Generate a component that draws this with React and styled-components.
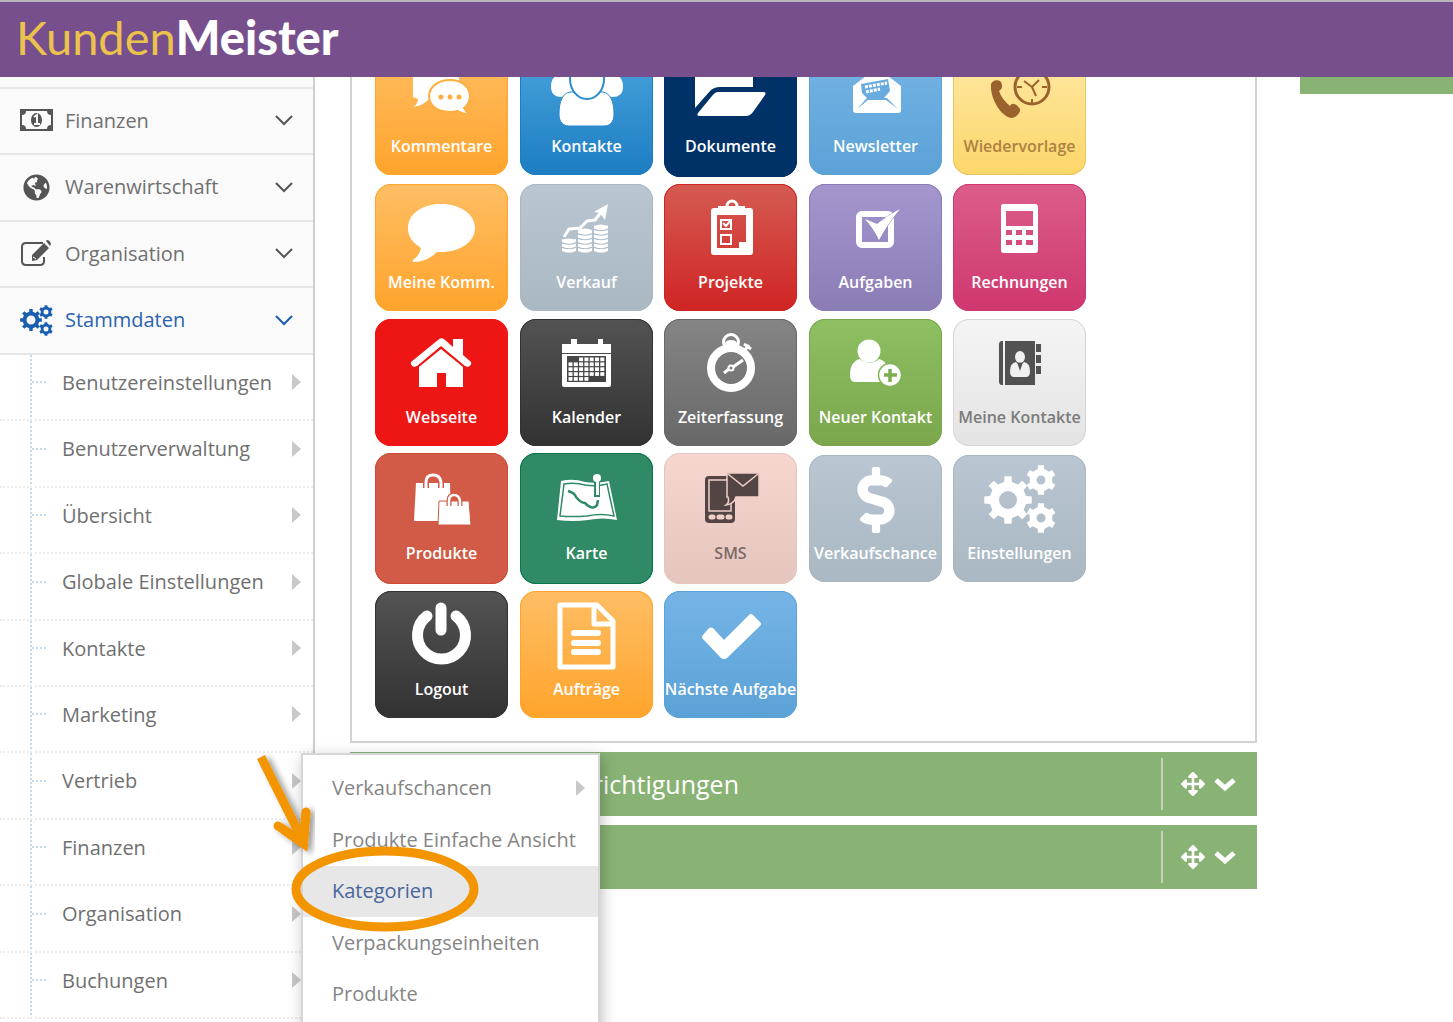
import React from "react";
import styled, { createGlobalStyle, css } from "styled-components";
import { FaArrowsAlt, FaDollarSign, FaGlobeAmericas } from "react-icons/fa";

// Zahnrad als Pfad: abwechselnd Zahn und Lücke, Loch in der Mitte
const gearPath = (cx, cy, r, teeth, hole) => {
  const inner = r * 0.77;
  const step = (Math.PI * 2) / teeth;
  const point = (radius, angle) =>
    `${(cx + radius * Math.sin(angle)).toFixed(2)} ${(cy - radius * Math.cos(angle)).toFixed(2)}`;
  const points = [];
  for (let i = 0; i < teeth; i++) {
    const a = i * step;
    points.push(
      point(inner, a - step * 0.27),
      point(r, a - step * 0.19),
      point(r, a + step * 0.19),
      point(inner, a + step * 0.27)
    );
  }
  return `M${points.join("L")}Z M${cx - hole} ${cy}a${hole} ${hole} 0 1 0 ${hole * 2} 0a${hole} ${hole} 0 1 0 ${-hole * 2} 0Z`;
};

const Gears = () => (
  <g fillRule="evenodd">
    <path d={gearPath(55, 45, 24, 8, 9)} />
    <path d={gearPath(88, 25, 15, 6, 4.5)} />
    <path d={gearPath(88, 63, 15, 6, 4.5)} />
  </g>
);

const calendarCells = [];
for (let row = 0; row < 5; row++) {
  for (let col = 0; col < 7; col++) {
    if ((row === 0 && col < 2) || (row === 4 && col > 3)) continue;
    calendarCells.push([48.5 + col * 5.3, 38.5 + row * 4.9]);
  }
}

const coinStacks = [
  [42, 3],
  [58, 5],
  [74, 6],
];

const TILES = [
  {
    label: "Kommentare",
    from: "#ffbe64",
    to: "#ffa42c",
    icon: (
      <>
        <path d="M38 16h46v36H53q-6 6-15 7q5-3 5-8l-5-2z" />
        <path
          d="M75 32c12 0 20 7 20 16 0 5-2 9-6 12 1 2 3 4 6 6-5 0-9-1-12-3-17 4-29-4-29-15 0-9 9-16 21-16z"
          stroke="#ffad40"
          strokeWidth="2"
        />
        <g fill="#ffad40">
          <circle cx="66" cy="49" r="2.500" />
          <circle cx="75" cy="49" r="2.500" />
          <circle cx="84" cy="49" r="2.500" />
        </g>
      </>
    ),
  },
  {
    label: "Kontakte",
    from: "#4ba4dd",
    to: "#1c7dc2",
    icon: (
      <>
        <path d="M31 39q0-10 7-12V14h18v24q-4 11-14 11-11 0-11-10zM103 39q0-10-7-12V14H78v24q4 11 14 11 11 0 11-10z" />
        <path
          d="M39 66c0-13 4-21 11-22h33c7 1 11 9 11 22 0 8-4 12-10 12H49c-6 0-10-4-10-12z"
          stroke="#2b8bcf"
        />
        <ellipse cx="67" cy="31" rx="17" ry="20" stroke="#2b8bcf" strokeWidth="2" />
      </>
    ),
  },
  {
    label: "Dokumente",
    from: "#013267",
    to: "#013267",
    tall: true,
    icon: (
      <>
        <path d="M31 20h55q3 0 3 4v15H56q-6 0-10 4L31 60z" />
        <path d="M54 44h45q4 0 2 3L89 64q-3 4-7 4H36q-4 0-2-3l14-17q3-4 6-4z" />
      </>
    ),
  },
  {
    label: "Newsletter",
    from: "#76b4e6",
    to: "#5ba2d6",
    icon: (
      <>
        <path d="M44 38l13-10q11-10 22 0l13 10v24q0 3-3 3H47q-3 0-3-3z" />
        <path d="M52 36l27-5 2 12-6 7H58l-5-5z" fill="#68acdf" />
        <path d="M48 61l10-11h20l11 11-12-9H59z" fill="#68acdf" />
        <path
          d="M56 39l22-4M57 44l14-3"
          fill="none"
          stroke="#fff"
          strokeWidth="3"
          strokeDasharray="3 1"
        />
      </>
    ),
  },
  {
    label: "Wiedervorlage",
    from: "#ffe9a6",
    to: "#fcd669",
    color: "#ae8243",
    iconColor: "#9a632d",
    edge: "#ebc55f",
    icon: (
      <>
        <path d="M38 37c0-4 6-6 9-4 3 3 3 8-1 10 2 6 6 11 11 15 2-4 7-2 10 3 1 3-3 8-8 9-11-1-22-20-21-33z" />
        <circle cx="79" cy="39" r="17" fill="none" stroke="currentColor" strokeWidth="3" />
        <path
          d="M79 51v5M64 39h5M89 39h5M71 33l8 6 7-7M79 39l4 9"
          fill="none"
          stroke="currentColor"
          strokeWidth="2"
        />
      </>
    ),
  },
  {
    label: "Meine Komm.",
    from: "#ffbe64",
    to: "#ffa42c",
    icon: (
      <path d="M66 20c19 0 34 10 34 24S85 68 66 68h-4c-6 6-14 10-24 10q-1-1 0-2 7-5 8-12c-8-5-13-11-13-20 0-14 14-24 33-24z" />
    ),
  },
  {
    label: "Verkauf",
    from: "#bac6d2",
    to: "#a9b8c2",
    icon: (
      <>
        {coinStacks.map(([x, count]) =>
          Array.from({ length: count }).map((_, index) => (
            <path
              key={`${x}-${index}`}
              d={`M${x} ${64 - index * 4.5}q7 2.500 14 0v3q-7 3.500-14 0z`}
            />
          ))
        )}
        <path d="M42 56q7-3 14 0l-7 3zM58 46q7-3 14 0l-7 3zM74 42q7-3 14 0l-7 3z" />
        <path
          d="M44 53l5-8 11-1 7-7 8-1 7-9"
          fill="none"
          stroke="currentColor"
          strokeWidth="3"
          strokeLinejoin="round"
        />
        <path d="M88 20l-14 8 6 1 5 7z" />
      </>
    ),
  },
  {
    label: "Projekte",
    from: "#d45b52",
    to: "#d02424",
    icon: (
      <>
        <path
          fillRule="evenodd"
          d="M50 24h36q3 0 3 3v41q0 3-3 3H50q-3 0-3-3V27q0-3 3-3zM53 31v33h22v-6h7V31z"
        />
        <path d="M54 22h27v9H54z" />
        <circle cx="68" cy="22" r="5" fill="none" stroke="currentColor" strokeWidth="3" />
        <path
          d="M57 36h10v9H57zM57 51h10v9H57zM59 39l3 3 5-6"
          fill="none"
          stroke="currentColor"
          strokeWidth="2"
        />
      </>
    ),
  },
  {
    label: "Aufgaben",
    from: "#a696ce",
    to: "#8b7cb6",
    icon: (
      <>
        <rect x="50" y="30" width="32" height="31" rx="3" fill="none" stroke="currentColor" strokeWidth="6" />
        <path d="M56 35l12 5q11-9 23-15-12 14-21 31-5-11-14-21z" stroke="#9b8bc4" />
        <path d="M56 35l12 5q11-9 23-15-12 14-21 31-5-11-14-21z" />
      </>
    ),
  },
  {
    label: "Rechnungen",
    from: "#dc5d8b",
    to: "#cf376f",
    icon: (
      <path
        fillRule="evenodd"
        d="M50 20h32q3 0 3 3v43q0 3-3 3H50q-2 0-2-3V23q0-3 2-3zM53 27v15h27V27zM53 46v5h6v-5zM63 46v5h6v-5zM73 46v5h7v-5zM53 56v5h6v-5zM63 56v5h6v-5zM73 56v5h7v-5z"
      />
    ),
  },
  {
    label: "Webseite",
    from: "#ee1515",
    to: "#ee1515",
    icon: (
      <>
        <path d="M66 19q2 0 4 2l8 7v-8h10v16l8 7q1 3-3 5l-3-1-24-20-24 20-3 1q-4-2-3-5l27-22q2-2 4-2z" />
        <path d="M66 30l22 18v20H71V54h-9v14H44V48z" />
      </>
    ),
  },
  {
    label: "Kalender",
    from: "#535353",
    to: "#323232",
    icon: (
      <>
        <path
          fillRule="evenodd"
          d="M42 25h9v-5h6v5h21v-5h5v5h8v41q0 2-2 2H44q-2 0-2-2zM42 34v1h49v-1zM47 37v26h39V37z"
        />
        {calendarCells.map(([x, y]) => (
          <rect key={`${x}-${y}`} x={x} y={y} width="4" height="3.700" />
        ))}
      </>
    ),
  },
  {
    label: "Zeiterfassung",
    from: "#858585",
    to: "#686868",
    icon: (
      <>
        <g fill="none" stroke="currentColor">
          <circle cx="67" cy="49" r="20" strokeWidth="8" />
          <circle cx="67" cy="23" r="7.500" strokeWidth="3" />
          <circle cx="67" cy="49" r="2.500" strokeWidth="2" />
          <path d="M60 54l5-4M69 48l10-7" strokeWidth="3" />
          <path d="M80 25l7 5M81 31l4-5" strokeWidth="3" />
        </g>
        <path d="M61 28v-4q1-3 6-3t6 3v4z" />
      </>
    ),
  },
  {
    label: "Neuer Kontakt",
    from: "#8ec063",
    to: "#7ba64c",
    icon: (
      <>
        <path d="M41 56c0-9 4-15 10-16 6 5 13 5 19 0 8 2 10 9 10 23H45q-4-1-4-7z" />
        <circle cx="60" cy="32" r="11.500" />
        <circle cx="81" cy="56" r="11.500" stroke="#85b559" strokeWidth="1.500" />
        <path d="M81 50v13M75 56h13" stroke="#7ead50" strokeWidth="3.500" />
      </>
    ),
  },
  {
    label: "Meine Kontakte",
    from: "#f5f5f5",
    to: "#e3e3e3",
    color: "#7b7b7b",
    iconColor: "#525252",
    edge: "#d6d6d6",
    icon: (
      <>
        <path d="M48 22h2v44h-2q-2-1-2-3V25q0-2 2-3zM52 22h30v44H52zM83 25h5v8h-5zM83 36h5v8h-5zM83 47h5v8h-5z" />
        <g fill="#f0f0f0">
          <ellipse cx="67" cy="38" rx="5" ry="6" />
          <path d="M57 52q0-8 6-9l4 5 4-5q6 1 6 9 0 6-4 6H61q-4 0-4-6z" />
        </g>
        <path d="M67 43l2 3-2 6-2-6z" />
      </>
    ),
  },
  {
    label: "Produkte",
    from: "#d15b46",
    to: "#d15b46",
    edge: "#cf4c36",
    tall: true,
    icon: (
      <>
        <path d="M41 28h34l1 38H39z" />
        <g fill="none" stroke="#d15b46" strokeWidth="6">
          <path d="M51 33v-6q0-7 7-7t8 7v6" />
        </g>
        <path d="M51 33v-6q0-7 7-7t8 7v6" fill="none" stroke="currentColor" strokeWidth="3" />
        <path d="M64 46h30l2 24H63z" stroke="#d15b46" />
        <path d="M74 51v-5q0-6 5-6t6 6v5" fill="none" stroke="#d15b46" strokeWidth="5" />
        <path d="M74 51v-5q0-6 5-6t6 6v5" fill="none" stroke="currentColor" strokeWidth="2.500" />
      </>
    ),
  },
  {
    label: "Karte",
    from: "#2f8a65",
    to: "#2f8a65",
    edge: "#097646",
    tall: true,
    icon: (
      <>
        <path d="M41 26q12-3 24 1 12 2 24-1l8 39q-15-3-29 0-15 2-31 0z" />
        <g fill="none" stroke="#2f8a65">
          <path d="M44 29q11-2 21 1 12 2 22-1l7 32q-13-3-27 0-14 1-27 0z" strokeWidth="1.500" />
          <path d="M48 36q7 2 8 6 5 6 9 6 8 8 12 2l1-5" strokeWidth="2.500" />
        </g>
        <path d="M74 26h6v16h-6z" fill="#2f8a65" />
        <circle cx="77" cy="23" r="4" />
        <path d="M76 26h3v14h-3z" />
      </>
    ),
  },
  {
    label: "SMS",
    from: "#f6d6cf",
    to: "#e4c6bf",
    color: "#7e6a67",
    iconColor: "#544545",
    edge: "#e6c5be",
    tall: true,
    icon: (
      <>
        <rect x="41" y="21" width="30" height="47" rx="4" />
        <rect x="45" y="25" width="22" height="31" fill="none" stroke="#f0cfc8" strokeWidth="1.500" />
        <path d="M47 62h2M55 62h3M64 62h2" stroke="#f0cfc8" strokeWidth="5" strokeLinecap="round" />
        <path d="M63 18h32v24H72q-2 7-10 8 4-3 2-8h-1z" stroke="#f0cfc8" strokeWidth="1.500" />
        <path d="M64 19l15 12 15-12" fill="none" stroke="#f0cfc8" strokeWidth="1.500" />
      </>
    ),
  },
  {
    label: "Verkaufschance",
    from: "#bac6d2",
    to: "#a9b8c2",
    icon: <FaDollarSign x="34" y="12" size={66} />,
  },
  {
    label: "Einstellungen",
    from: "#bac6d2",
    to: "#a9b8c2",
    icon: <Gears />,
  },
  {
    label: "Logout",
    from: "#535353",
    to: "#323232",
    icon: (
      <g fill="none" stroke="currentColor" strokeWidth="11" strokeLinecap="round">
        <path d="M52 25a24 24 0 1 0 29 0" />
        <path d="M66 17v22" />
      </g>
    ),
  },
  {
    label: "Aufträge",
    from: "#ffbe64",
    to: "#ffa42c",
    icon: (
      <g fill="none" stroke="currentColor" strokeWidth="5" strokeLinejoin="round">
        <path d="M40 14h37l16 16v46H40z" />
        <path d="M74 14v19h18" />
        <path d="M54 42h24M54 52h24M54 61h24" strokeWidth="6" strokeLinecap="round" />
      </g>
    ),
  },
  {
    label: "Nächste Aufgabe",
    from: "#76b4e6",
    to: "#5ba2d6",
    icon: (
      <path
        d="M60 68q-2 0-3-1L39 48q-2-2 0-4l6-7q2-1 4 0l11 12 25-25q2-2 4 0l7 7q2 2 0 4L63 67q-1 1-3 1z"
      />
    ),
  },
];

const MAIN_NAV = [
  {
    label: "Finanzen",
    icon: (
      <>
        <path fillRule="evenodd" d="M0 7h33v22H0zM6 9q0 4-4 4v10q4 0 4 4h21q0-4 4-4V13q-4 0-4-4z" />
        <ellipse cx="16.500" cy="18" rx="5.500" ry="7" />
        <path d="M14 15l3-2v9M14 22h6" fill="none" stroke="#fafafa" strokeWidth="2" />
      </>
    ),
  },
  {
    label: "Warenwirtschaft",
    icon: <FaGlobeAmericas x="3" y="5" size={27} />,
  },
  {
    label: "Organisation",
    icon: (
      <>
        <path
          d="M23 8H6Q2 8 2 12v14q0 4 4 4h14q4 0 4-4v-4"
          fill="none"
          stroke="currentColor"
          strokeWidth="2"
        />
        <path d="M12 26v-6L24 8l5 5-12 12zM26 6l1-1q3 0 4 4l-1 2z" />
        <path d="M13 22l3 2" stroke="#fafafa" />
      </>
    ),
  },
  {
    label: "Stammdaten",
    active: true,
    icon: (
      <g fillRule="evenodd">
        <path d={gearPath(11, 18, 11, 8, 4.5)} />
        <path d={gearPath(26, 10, 7, 6, 2.5)} />
        <path d={gearPath(26, 27, 7, 6, 2.5)} />
      </g>
    ),
  },
];

const SUB_NAV = [
  "Benutzereinstellungen",
  "Benutzerverwaltung",
  "Übersicht",
  "Globale Einstellungen",
  "Kontakte",
  "Marketing",
  "Vertrieb",
  "Finanzen",
  "Organisation",
  "Buchungen",
];

const FLYOUT = [
  { label: "Verkaufschancen", more: true },
  { label: "Produkte Einfache Ansicht" },
  { label: "Kategorien", current: true },
  { label: "Verpackungseinheiten" },
  { label: "Produkte" },
];

const Widget = ({ title }) => (
  <WidgetBar>
    <WidgetTitle>{title}</WidgetTitle>
    <WidgetTools>
      <ToolButton type="button" aria-label="Verschieben">
        <FaArrowsAlt size={24} />
      </ToolButton>
      <ToolButton type="button" aria-label="Aufklappen">
        <svg width="24" height="24" viewBox="0 0 24 24" aria-hidden="true">
          <path d="M3 8l9 8 9-8" fill="none" stroke="currentColor" strokeWidth="5" />
        </svg>
      </ToolButton>
    </WidgetTools>
  </WidgetBar>
);

const App = () => (
  <Page>
    <GlobalStyle />
    <Header>
      <Logo href="#">
        Kunden<strong>Meister</strong>
      </Logo>
    </Header>

    <Sidebar>
      <MainNav>
        {MAIN_NAV.map((item) => (
          <MainItem key={item.label}>
            <MainButton type="button" $active={item.active}>
              <svg width="34" height="36" viewBox="0 0 34 36" fill="currentColor" aria-hidden="true">
                {item.icon}
              </svg>
              <span>{item.label}</span>
              <svg width="20" height="12" viewBox="0 0 20 12" aria-hidden="true">
                <path d="M2 2l8 8 8-8" fill="none" stroke="currentColor" strokeWidth="2" />
              </svg>
            </MainButton>
          </MainItem>
        ))}
      </MainNav>
      <SubNav>
        {SUB_NAV.map((label) => (
          <SubItem key={label}>
            <SubLink href="#">{label}</SubLink>
            {label === "Vertrieb" && (
              <>
                <Flyout>
                  {FLYOUT.map((entry) => (
                    <li key={entry.label}>
                      <FlyoutLink href="#" $current={entry.current} $more={entry.more}>
                        {entry.label}
                      </FlyoutLink>
                    </li>
                  ))}
                </Flyout>
                <Marker width="230" height="190" viewBox="0 0 230 190" aria-hidden="true">
                  <g fill="none" stroke="#f39500">
                    <g filter="url(#marker-shadow)">
                      <path d="M10 4l38 76" strokeWidth="9" />
                      <path d="M27 73l24 15M55 59l-3 30" strokeWidth="9" strokeLinecap="round" />
                      <path d="M30 80l26 18 3-38-11 18z" fill="#f39500" strokeWidth="1" />
                    </g>
                    <ellipse cx="134" cy="136" rx="89" ry="38" strokeWidth="9" />
                  </g>
                  <filter id="marker-shadow">
                    <feDropShadow dx="4" dy="2" stdDeviation="3" floodOpacity="0.4" />
                  </filter>
                </Marker>
              </>
            )}
          </SubItem>
        ))}
      </SubNav>
    </Sidebar>

    <Main>
      <Column>
        <Panel>
          <TileGrid>
            {TILES.map((tile) => (
              <Tile
                key={tile.label}
                href="#"
                $from={tile.from}
                $to={tile.to}
                $edge={tile.edge}
                $tall={tile.tall}
                $color={tile.color}
              >
                <TileIcon viewBox="0 0 133 84" $color={tile.iconColor} aria-hidden="true">
                  {tile.icon}
                </TileIcon>
                <TileLabel>{tile.label}</TileLabel>
              </Tile>
            ))}
          </TileGrid>
        </Panel>
        <Widget title="Benachrichtigungen" />
        <Widget />
      </Column>
      <SideColumn>
        <SideBar />
      </SideColumn>
    </Main>
  </Page>
);

export default App;

// Styles
const GlobalStyle = createGlobalStyle`
  * {
    box-sizing: border-box;
  }

  body {
    margin: 0;
    background: #fff;
    font-family: "Open Sans", "Noto Sans", sans-serif;
    color: #707070;
  }

  ul {
    margin: 0;
    padding: 0;
    list-style: none;
  }

  a {
    color: inherit;
    text-decoration: none;
  }

  button {
    padding: 0;
    border: 0;
    background: none;
    color: inherit;
    font: inherit;
    cursor: pointer;
  }
`;

const Page = styled.div`
  display: flex;
  height: 100vh;
  overflow: hidden;
`;

const Header = styled.header`
  position: fixed;
  top: 0;
  left: 0;
  right: 0;
  z-index: 10;
  display: flex;
  align-items: center;
  height: 77px;
  padding: 0 16px 6px;
  border-top: 2px solid #b9b4bd;
  background: #774f8d;
`;

const Logo = styled.a`
  font-family: Lato, "Open Sans", sans-serif;
  font-size: 47px;
  line-height: 60px;
  color: #ebc24c;

  strong {
    font-weight: 900;
    color: #fff;
  }
`;

const Sidebar = styled.nav`
  position: relative;
  z-index: 2;
  flex: none;
  width: 315px;
  border-right: 2px solid #cfcfcf;
`;

const MainNav = styled.ul`
  display: grid;
  grid-auto-rows: 66px 67px;
  padding-top: 87px;
  background: #fafafa;
`;

const MainItem = styled.li`
  display: flex;
  border-top: 2px solid #e6e6e6;
`;

const MainButton = styled.button`
  flex: 1;
  display: flex;
  align-items: center;
  gap: 11px;
  padding: 0 19px 2px 20px;
  font-size: 20px;
  text-align: left;
  color: ${({ $active }) => ($active ? "#2b63b0" : "#707070")};

  svg {
    color: ${({ $active }) => ($active ? "#1a5eb0" : "#555")};
  }

  span {
    flex: 1;
  }
`;

const SubNav = styled.ul`
  display: grid;
  grid-auto-rows: 66px 67px 66px 67px 66px;
  border-top: 2px solid #e6e6e6;
`;

const rightArrow = css`
  &::after {
    content: "";
    margin-left: auto;
    border: 8px solid transparent;
    border-left: 9px solid #c8c8c8;
    border-right: 0;
  }
`;

const SubItem = styled.li`
  position: relative;
  display: flex;
  margin-left: 30px;
  border-left: 2px dotted #c3dbec;
  border-bottom: 2px dotted #ececec;

  /* Trennlinie bis zum linken Rand */
  &::before {
    content: "";
    position: absolute;
    left: -32px;
    bottom: -2px;
    width: 32px;
    border-bottom: 2px dotted #ececec;
  }
`;

const SubLink = styled.a`
  flex: 1;
  display: flex;
  align-items: center;
  padding: 0 12px 10px 0;
  font-size: 20px;

  &::before {
    content: "";
    width: 14px;
    margin-right: 16px;
    border-top: 2px dotted #c3dbec;
  }

  ${rightArrow}
`;

const Flyout = styled.ul`
  position: absolute;
  top: 0;
  left: 269px;
  display: grid;
  grid-auto-rows: 51px 52px;
  width: 299px;
  padding: 8px 0;
  border: 2px solid #d6d6d6;
  background: #fff;
  box-shadow: 2px 4px 14px rgba(0, 0, 0, 0.25);
  z-index: 1;
`;

const FlyoutLink = styled.a`
  display: flex;
  align-items: center;
  height: 100%;
  padding: 0 13px 2px 29px;
  font-size: 20px;
  white-space: nowrap;
  color: ${({ $current }) => ($current ? "#47659c" : "#858585")};
  background: ${({ $current }) => ($current ? "#e7e7e7" : "transparent")};

  ${({ $more }) => $more && rightArrow}
`;

const Marker = styled.svg`
  position: absolute;
  top: 0;
  left: 219px;
  z-index: 2;
  pointer-events: none;
`;

const Main = styled.main`
  flex: 1;
  display: flex;
  gap: 43px;
  min-width: 0;
  padding-left: 35px;
`;

const Column = styled.div`
  flex: 1;
  display: flex;
  flex-direction: column;
  gap: 9px;
`;

const Panel = styled.section`
  padding: 46px 23px 23px;
  border: 2px solid #d2d2d2;
  border-top: 0;
`;

const TileGrid = styled.div`
  display: grid;
  grid-template-columns: 145px 144px 145px 144px 133px;
  grid-template-rows: 131px 127px 128px 131px 127px;
  row-gap: 7px;
  align-items: center;
`;

const Tile = styled.a`
  display: flex;
  flex-direction: column;
  align-items: center;
  justify-content: center;
  width: 133px;
  height: ${({ $tall }) => ($tall ? "131px" : "127px")};
  padding-bottom: 15px;
  border-radius: 16px;
  background: linear-gradient(${({ $from }) => $from}, ${({ $to }) => $to});
  box-shadow: inset 0 0 0 1px ${({ $edge, $to }) => $edge || $to};
  color: ${({ $color }) => $color || "#fff"};
`;

const TileIcon = styled.svg`
  width: 133px;
  height: 84px;
  flex: none;
  fill: currentColor;
  color: ${({ $color }) => $color || "#fff"};
`;

const TileLabel = styled.span`
  font-size: 16px;
  line-height: 28px;
  font-weight: 600;
  white-space: nowrap;
`;

const WidgetBar = styled.section`
  display: flex;
  align-items: center;
  height: 64px;
  padding: 6px 0 6px 156px;
  background: #89b375;
  color: #fff;
`;

const WidgetTitle = styled.h2`
  flex: 1;
  margin: 0;
  font-size: 25px;
  font-weight: 400;
`;

const WidgetTools = styled.div`
  display: flex;
  align-items: center;
  gap: 8px;
  height: 52px;
  padding: 0 20px 0 18px;
  border-left: 2px solid #c5d3bc;
`;

const ToolButton = styled.button`
  display: flex;
`;

const SideColumn = styled.aside`
  flex: none;
  width: 153px;
`;

const SideBar = styled.div`
  height: 94px;
  background: #89b375;
`;
